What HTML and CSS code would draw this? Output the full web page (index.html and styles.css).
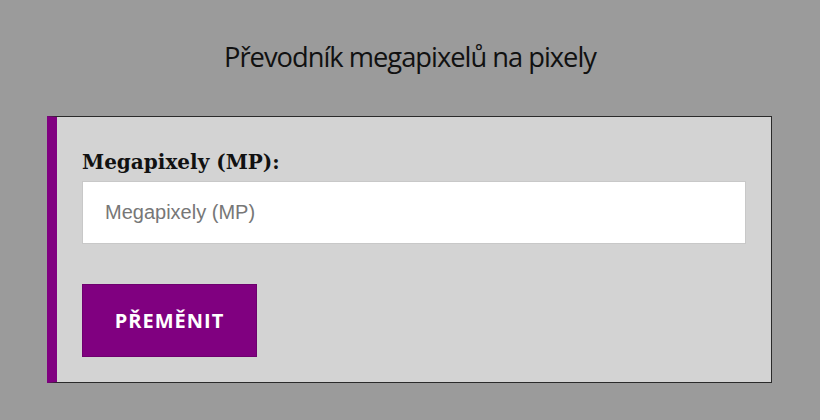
FILE: index.html
```html
<!DOCTYPE html>
<html lang="cs">
<head>
<meta charset="utf-8">
<title>Převodník megapixelů na pixely</title>
<link rel="stylesheet" href="styles.css">
</head>
<body>
<h1 class="title">Převodník megapixelů na pixely</h1>
<form class="card">
  <label class="label" for="mp">Megapixely (MP):</label>
  <input class="input" id="mp" type="text" placeholder="Megapixely (MP)">
  <button class="btn" type="button">PŘEMĚNIT</button>
</form>
</body>
</html>
```

FILE: styles.css
```css
html, body {
  margin: 0;
  padding: 0;
}
body {
  background: #9b9b9b;
  width: 820px;
  height: 420px;
  overflow: hidden;
}
.title {
  margin: 0;
  padding-top: 38px;
  height: 116px;
  box-sizing: border-box;
  text-align: center;
  font-family: "Open Sans", sans-serif;
  font-weight: 400;
  font-size: 27.3px;
  letter-spacing: -1px;
  line-height: 38px;
  color: #111;
}
.card {
  margin: 0 0 0 47px;
  width: 725px;
  height: 267px;
  box-sizing: border-box;
  background: #d3d3d3;
  border: 1px solid #2a2a2a;
  border-left: 10px solid #800080;
  padding: 32px 25px 0 25px;
  display: flex;
  flex-direction: column;
  align-items: flex-start;
}
.label {
  font-family: "DejaVu Serif", serif;
  font-weight: 700;
  font-size: 20px;
  line-height: 26px;
  color: #111;
  margin-bottom: 6px;
}
.input {
  width: 100%;
  height: 63px;
  box-sizing: border-box;
  border: 1px solid #c8c8c8;
  background: #fff;
  padding: 0 22px;
  font-family: "Liberation Sans", Arial, sans-serif;
  font-size: 20px;
  color: #333;
  outline: none;
  margin: 0;
}
.input::placeholder {
  color: #777;
}
.btn {
  margin-top: 40px;
  width: 175px;
  height: 73px;
  background: #800080;
  border: 1px solid #6e006e;
  color: #fff;
  font-family: "Open Sans", sans-serif;
  font-weight: 700;
  font-size: 20px;
  letter-spacing: 1px;
  cursor: pointer;
  padding: 0;
}
```
